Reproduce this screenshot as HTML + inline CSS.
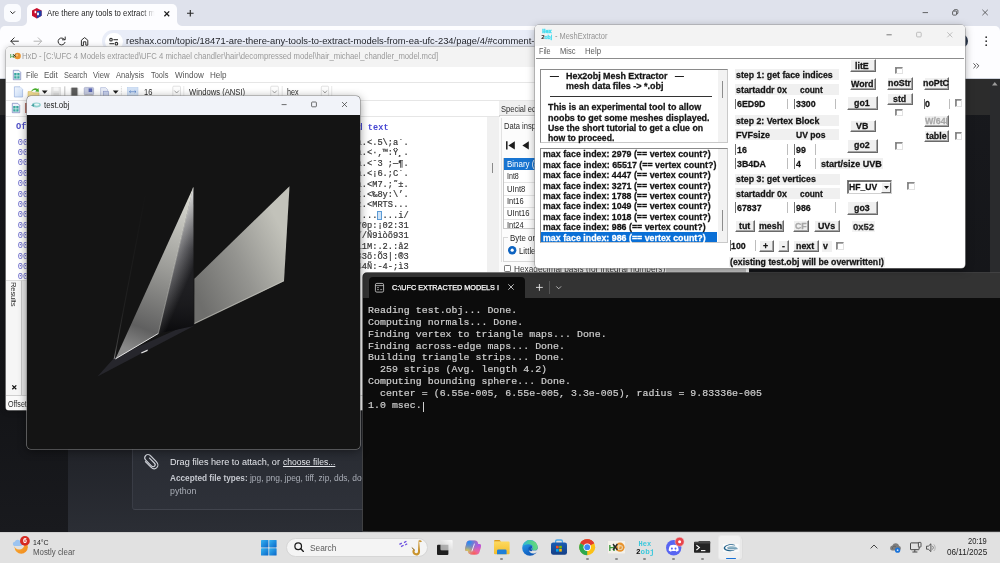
<!DOCTYPE html>
<html>
<head>
<meta charset="utf-8">
<title>desktop</title>
<style>
*{box-sizing:border-box;margin:0;padding:0}
html,body{width:1000px;height:563px;overflow:hidden;background:#1b1c20}
body{font-family:"Liberation Sans",sans-serif;position:relative;color:#222;will-change:transform}
#w{position:absolute;left:0;top:0;width:1000px;height:563px;overflow:hidden;transform:translateZ(0);will-change:transform}
.a{position:absolute}
.t{position:absolute;white-space:pre;}
svg{position:absolute;overflow:visible}
</style>
</head>
<body>
<div id="w">
<!-- sec_chrome -->
<div class="a" style="left:0.00px;top:0.00px;width:1000.00px;height:34.00px;background:#dfe2ec;"></div>
<div class="a" style="left:4.20px;top:4.40px;width:17.20px;height:17.20px;background:#fafbfe;border-radius:5px;"></div>
<svg style="left:10.2px;top:11.4px" width="5.4" height="3.4" viewBox="0 0 5.4 3.4"><path d="M0.4 0.4l2.3 2.3l2.3-2.3" stroke="#222" stroke-width="1" fill="none"/></svg>
<div class="a" style="left:26.60px;top:3.80px;width:150.60px;height:22.40px;background:#fdfdff;border-radius:5px 5px 0 0;"></div>
<svg style="left:21.6px;top:21.2px" width="5" height="5" viewBox="0 0 5 5"><path d="M5 0v5H0A5 5 0 0 0 5 0z" fill="#fdfdff"/></svg>
<svg style="left:177.2px;top:21.2px" width="5" height="5" viewBox="0 0 5 5"><path d="M0 0v5h5A5 5 0 0 1 0 0z" fill="#fdfdff"/></svg>
<svg style="left:31.6px;top:8px" width="9.6" height="10.4" viewBox="0 0 9.6 10.4"><path d="M4.8 0L9.6 2.6V7.8L4.8 10.4L0 7.8V2.6z" fill="#c8102e"/><path d="M4.8 3.2L9.6 2.6V7.8L4.8 10.4z" fill="#1d3fa8"/><rect x="2.6" y="2.8" width="1.6" height="2.4" fill="#fff"/><rect x="5" y="4.6" width="2" height="2.6" fill="#fff" opacity=".9"/></svg>
<div class="t" style="left:46.60px;top:8.14px;font-size:8.4px;line-height:10.08px;color:#1f1f1f;transform-origin:0 50%;transform:scaleX(0.9288);-webkit-mask-image:linear-gradient(90deg,#000 88%,transparent 100%);">Are there any tools to extract m</div>
<svg style="left:164px;top:10.6px" width="5.6" height="5.6" viewBox="0 0 5.6 5.6"><path d="M0.4 0.4l4.8 4.8M5.2 0.4l-4.8 4.8" stroke="#1c1c1c" stroke-width="1.3"/></svg>
<svg style="left:186.6px;top:10.2px" width="6.6" height="6.6" viewBox="0 0 6.6 6.6"><path d="M3.3 0v6.6M0 3.3h6.6" stroke="#2a2a2a" stroke-width="1.15"/></svg>
<svg style="left:918px;top:6px" width="76" height="14" viewBox="0 0 76 14"><g stroke="#3a3a3a" stroke-width="0.75" fill="none"><path d="M4.6 6.6h5.4"/><rect x="34.6" y="5.1" width="4" height="4" rx="0.8"/><path d="M35.8 5.1v-0.5a0.9 0.9 0 0 1 0.9-0.9h2.3a0.9 0.9 0 0 1 0.9 0.9v2.3a0.9 0.9 0 0 1 -0.9 0.9h-0.4"/><path d="M64.4 3.8l5.4 5.4M69.8 3.8l-5.4 5.4"/></g></svg>
<div class="a" style="left:0.00px;top:26.00px;width:1000.00px;height:52.60px;background:#fdfdff;border-radius:5px 5px 0 0;"></div>
<div class="a" style="left:0.00px;top:78.00px;width:1000.00px;height:0.80px;background:#cfd3dc;"></div>
<svg style="left:9px;top:35px" width="84" height="13" viewBox="0 0 84 13"><g fill="none" stroke-width="1" stroke-linecap="round" stroke-linejoin="round"><path d="M9.4 6.2H2M5.2 2.8L1.8 6.2L5.2 9.6" stroke="#303030"/><path d="M25 6.2h7.4M29.2 2.8l3.4 3.4l-3.4 3.4" stroke="#b4b4b4"/><path d="M55.6 4.6A3.5 3.5 0 1 0 56 7.4" stroke="#303030"/><path d="M56.2 2v2.8h-2.8" stroke="#303030"/><path d="M72.4 10.2V5.2L75.6 2.6L78.8 5.2V10.2H76.8V6.8H74.4V10.2z" stroke="#303030"/></g></svg>
<div class="a" style="left:102.20px;top:30.00px;width:470.00px;height:22.40px;background:#e9edf8;border-radius:11.2px;"></div>
<div class="a" style="left:105.40px;top:32.60px;width:17.40px;height:17.40px;background:#ffffff;border-radius:50%;"></div>
<svg style="left:109.2px;top:37.6px" width="9.6" height="7.4" viewBox="0 0 9.6 7.4"><g stroke="#303030" stroke-width="1.1" fill="none"><circle cx="2" cy="1.7" r="1.3"/><path d="M4.4 1.7h4.6"/><circle cx="7.4" cy="5.7" r="1.3"/><path d="M0.4 5.7h4.6"/></g></svg>
<div class="t" style="left:125.60px;top:35.55px;font-size:9.0px;line-height:10.80px;color:#24262b;transform-origin:0 50%;transform:scaleX(1.0428);">reshax.com/topic/18471-are-there-any-tools-to-extract-models-from-ea-ufc-234/page/4/#comment-</div>
<div class="a" style="left:953.80px;top:34.00px;width:14.00px;height:14.00px;background:#28354a;border-radius:50%;"></div>
<svg style="left:984.6px;top:36px" width="2.4" height="10.4" viewBox="0 0 2.4 10.4"><circle cx="1.2" cy="1.2" r="0.9" fill="#333"/><circle cx="1.2" cy="5.2" r="0.9" fill="#333"/><circle cx="1.2" cy="9.2" r="0.9" fill="#333"/></svg>
<svg style="left:973.4px;top:62.6px" width="6.4" height="5.6" viewBox="0 0 6.4 5.6"><path d="M0.5 0.4l2.4 2.4l-2.4 2.4M3.5 0.4l2.4 2.4l-2.4 2.4" stroke="#3a3a3a" stroke-width="0.9" fill="none"/></svg>
<div class="a" style="left:0.00px;top:78.80px;width:1000.00px;height:453.00px;background:linear-gradient(#18191d 0%,#131417 70%,#191a1e 100%);"></div>
<div class="a" style="left:0.00px;top:78.80px;width:1000.00px;height:36.60px;background:#2c2c2c;"></div>
<div class="a" style="left:68.00px;top:410.00px;width:300.00px;height:122.00px;background:linear-gradient(#1d1f24 0%,#22242a 40%,#2b2e35 100%);"></div>
<div class="a" style="left:131.60px;top:440.00px;width:240.00px;height:70.40px;background:linear-gradient(#282b32,#2e3139);border-bottom:1px solid #41444d;border-left:1px solid #393c45;border-radius:0 0 0 3px;"></div>
<div class="a" style="left:990.20px;top:78.80px;width:10.00px;height:452.00px;background:#2a2b2d;"></div>
<svg style="left:991.8px;top:82.4px" width="5.6" height="3.6" viewBox="0 0 5.6 3.6"><path d="M2.8 0L5.6 3.6H0z" fill="#9c9c9c"/></svg>
<svg style="left:143.400px;top:451.600px" width="16" height="18" viewBox="0 0 16 18"><path d="M2.600 3.600c1.300-1.500 3.300-1.500 4.700-0.100l6 6.100c2 2 2 4.600 0.500 6.100c-1.500 1.500-4 1.400-5.900-0.500L2.400 9.700" fill="none" stroke="#cfd2d9" stroke-width="1.150" stroke-linecap="round"/><path d="M2.600 3.600c-1.300 1.500-1.100 3.300 0.200 4.600l5.600 5.700c1 1 2.400 1.100 3.200 0.300c0.800-0.800 0.700-2.200-0.300-3.200L6.500 6.100" fill="none" stroke="#cfd2d9" stroke-width="1.150" stroke-linecap="round"/></svg>
<div class="t" style="left:170.00px;top:455.69px;font-size:9.7px;line-height:11.64px;color:#e3e5ea;transform-origin:0 50%;transform:scaleX(0.9408);">Drag files here to attach, or </div>
<div class="t" style="left:282.60px;top:455.69px;font-size:9.7px;line-height:11.64px;color:#e3e5ea;transform-origin:0 50%;transform:scaleX(0.8836);text-decoration:underline;text-decoration-thickness:0.6px;text-underline-offset:1px;">choose files...</div>
<div class="t" style="left:170.00px;top:472.95px;font-size:9px;line-height:10.80px;color:#c6c9d0;font-weight:bold;transform-origin:0 50%;transform:scaleX(0.9128);">Accepted file types:</div>
<div class="t" style="left:250.40px;top:472.95px;font-size:9px;line-height:10.80px;color:#a9adb6;transform-origin:0 50%;transform:scaleX(0.9346);">jpg, png, jpeg, tiff, zip, dds, do</div>
<div class="t" style="left:170.00px;top:485.55px;font-size:9px;line-height:10.80px;color:#a9adb6;transform-origin:0 50%;transform:scaleX(0.9771);">python</div>
<!-- sec_hxd -->
<div class="a" style="left:6.00px;top:46.70px;width:739.60px;height:363.00px;background:#ffffff;border-radius:4px 4px 3px 3px;box-shadow:0 0 0 0.6px #a8a8a8,0 1px 6px rgba(0,0,0,.3);"></div>
<div class="a" style="left:6.00px;top:46.70px;width:739.60px;height:20.70px;background:#f3f3f3;border-radius:4px 4px 0 0;"></div>
<svg style="left:10.4px;top:52px" width="11" height="8" viewBox="0 0 11 8"><text x="0" y="6" font-size="5.5" font-weight="bold" fill="#3a9a3a" font-family="Liberation Sans">Hx</text><circle cx="7.6" cy="4" r="3.2" fill="#e8932e"/><circle cx="6.8" cy="3.2" r="1.2" fill="#f6c27a"/><path d="M3.4 2.4l2.4 2.4M5.8 2.4l-2.4 2.4" stroke="#222" stroke-width="0.8"/></svg>
<div class="t" style="left:22.20px;top:51.87px;font-size:8.2px;line-height:9.84px;color:#9a9a9a;transform-origin:0 50%;transform:scaleX(0.9410);">HxD - [C:\UFC 4 Models extracted\UFC 4 michael chandler\hair\decompressed model\hair_michael_chandler_model.mcd]</div>
<div class="a" style="left:6.00px;top:82.00px;width:739.60px;height:0.70px;background:#e6e6e6;"></div>
<svg style="left:12.6px;top:70px" width="8" height="10" viewBox="0 0 8 10"><path d="M0.3 0.3h5.4l2 2v7.4H0.3z" fill="#eef3fb" stroke="#5f6fb0" stroke-width="0.6"/><rect x="1.2" y="3" width="5.4" height="5.6" fill="#3aa6a0"/><path d="M1.2 5.8h5.4M3.9 3v5.6" stroke="#fff" stroke-width="0.6"/></svg>
<div class="t" style="left:26.00px;top:70.27px;font-size:8.5px;line-height:10.20px;color:#565656;transform-origin:0 50%;transform:scaleX(0.8908);">File</div>
<div class="t" style="left:44.20px;top:70.27px;font-size:8.5px;line-height:10.20px;color:#565656;transform-origin:0 50%;transform:scaleX(0.9422);">Edit</div>
<div class="t" style="left:63.60px;top:70.27px;font-size:8.5px;line-height:10.20px;color:#565656;transform-origin:0 50%;transform:scaleX(0.8689);">Search</div>
<div class="t" style="left:93.00px;top:70.27px;font-size:8.5px;line-height:10.20px;color:#565656;transform-origin:0 50%;transform:scaleX(0.8977);">View</div>
<div class="t" style="left:116.00px;top:70.27px;font-size:8.5px;line-height:10.20px;color:#565656;transform-origin:0 50%;transform:scaleX(0.8847);">Analysis</div>
<div class="t" style="left:150.60px;top:70.27px;font-size:8.5px;line-height:10.20px;color:#565656;transform-origin:0 50%;transform:scaleX(0.8769);">Tools</div>
<div class="t" style="left:174.60px;top:70.27px;font-size:8.5px;line-height:10.20px;color:#565656;transform-origin:0 50%;transform:scaleX(0.9527);">Window</div>
<div class="t" style="left:210.00px;top:70.27px;font-size:8.5px;line-height:10.20px;color:#565656;transform-origin:0 50%;transform:scaleX(0.9496);">Help</div>
<div class="a" style="left:6.00px;top:100.00px;width:739.60px;height:0.70px;background:#e6e6e6;"></div>
<svg style="left:0;top:0.6px" width="340" height="100" viewBox="0 0 340 100"><defs><linearGradient id="gnew" x1="0" y1="0" x2="1" y2="1"><stop offset="0" stop-color="#f2f7fe"/><stop offset="1" stop-color="#c4d8f4"/></linearGradient></defs><path d="M14.4 85.8h5.6l2.6 2.6v7.6h-8.2z" fill="url(#gnew)" stroke="#9ab2de" stroke-width="0.7"/><path d="M20 85.800v2.600h2.600z" fill="#e6eefb"/><path d="M28 90.600h4l1 1.200h6v5H28z" fill="#f2dd92" stroke="#d2b458" stroke-width="0.500"/><path d="M31.400 89.800c1.600-2.800 4.400-3.200 6.200-1.800l0.800-1l0.600 3.800l-3.800-0.400l1-1c-1.200-0.800-3-0.600-4.200 0.800z" fill="#4ab02e"/><path d="M41.800 89.600h5.800l-2.900 3.200z" fill="#1c1c1c"/><rect x="51.800" y="86.400" width="8.600" height="9.600" fill="#e9e9e9" stroke="#d2d2d2" stroke-width="0.500"/><rect x="53.600" y="86.400" width="5" height="3.400" fill="#f8f8f8"/><rect x="53.400" y="91.800" width="5.600" height="4.200" fill="#dcdcdc"/><path d="M64.800 85.400v11.600" stroke="#b0b0b0" stroke-width="0.800"/><rect x="71.400" y="86.600" width="6" height="9.600" fill="#555"/><path d="M70.400 88h8M70.400 90h8M70.400 92h8M70.400 94h8" stroke="#777" stroke-width="0.500"/><rect x="84.2" y="86.4" width="9.4" height="7.4" rx="1" fill="#c6cbe0" stroke="#8b93b8" stroke-width="0.5"/><rect x="88.6" y="87.4" width="3.6" height="3.6" fill="#5a66b4"/><ellipse cx="89" cy="95" rx="4.6" ry="1.6" fill="#d9d9d9" stroke="#aaa" stroke-width="0.4"/><path d="M100.6 86.6h5l2 2v7.4h-7z" fill="#e9edf8" stroke="#98a4cc" stroke-width="0.5"/><rect x="103.4" y="90.2" width="5.2" height="5.4" fill="#c9d2ee" stroke="#7f8cc0" stroke-width="0.5"/><path d="M112.800 89.600h5.800l-2.900 3.200z" fill="#1c1c1c"/><path d="M121.4 85.4v11.6" stroke="#bdbdbd" stroke-width="0.7" stroke-dasharray="0.8 0.8"/><rect x="127.300" y="86.400" width="10.700" height="8.600" fill="#d3e2f6" stroke="#b3cbec" stroke-width="0.500"/><path d="M129.400 90.700h6.600M129.400 90.700l1.400-1.200M129.400 90.700l1.400 1.200M136 90.700l-1.400-1.200M136 90.700l-1.400 1.200" stroke="#4a78c4" stroke-width="0.600"/><rect x="172.8" y="85.200" width="7.7" height="11" rx="1" fill="#fdfdfd" stroke="#cfcfcf" stroke-width="0.600"/><path d="M174.4 89.6l2.25 2.400l2.25-2.400" stroke="#6a6a6a" stroke-width="0.600" fill="none"/><path d="M183.8 85v11.400" stroke="#dadada" stroke-width="0.600"/><rect x="270.7" y="85.200" width="7.7" height="11" rx="1" fill="#fdfdfd" stroke="#cfcfcf" stroke-width="0.600"/><path d="M272.3 89.6l2.25 2.400l2.25-2.400" stroke="#6a6a6a" stroke-width="0.600" fill="none"/><path d="M282.2 85v11.400" stroke="#dadada" stroke-width="0.600"/><rect x="321.3" y="85.200" width="7.3" height="11" rx="1" fill="#fdfdfd" stroke="#cfcfcf" stroke-width="0.600"/><path d="M322.9 89.6l2.05 2.400l2.05-2.400" stroke="#6a6a6a" stroke-width="0.600" fill="none"/><path d="M331.7 85v11.400" stroke="#dadada" stroke-width="0.600"/></svg>
<div class="t" style="left:143.80px;top:86.74px;font-size:8.4px;line-height:10.08px;color:#2a2a2a;transform-origin:0 50%;transform:scaleX(0.8991);">16</div>
<div class="t" style="left:188.90px;top:86.74px;font-size:8.4px;line-height:10.08px;color:#2a2a2a;transform-origin:0 50%;transform:scaleX(0.9138);">Windows (ANSI)</div>
<div class="t" style="left:287.20px;top:86.74px;font-size:8.4px;line-height:10.08px;color:#2a2a2a;transform-origin:0 50%;transform:scaleX(0.8566);">hex</div>
<div class="a" style="left:6.00px;top:116.40px;width:493.00px;height:0.70px;background:#e6e6e6;"></div>
<svg style="left:12.4px;top:103px" width="8" height="10" viewBox="0 0 8 10"><path d="M0.3 0.3h5.4l2 2v7.4H0.3z" fill="#eef3fb" stroke="#5f6fb0" stroke-width="0.6"/><rect x="1.2" y="3" width="5.4" height="5.6" fill="#3aa6a0"/><path d="M1.2 5.8h5.4M3.9 3v5.6" stroke="#fff" stroke-width="0.6"/></svg>
<div class="a" style="left:25.20px;top:103.40px;width:1.80px;height:9.60px;background:#b8766c;"></div>
<div class="t" style="left:16.00px;top:122.34px;font-size:8.7px;line-height:10.44px;color:#4f4fc8;font-weight:bold;font-family:'Liberation Mono',monospace;">Offset(h)</div>
<div class="t" style="left:17.80px;top:137.84px;font-size:8.7px;line-height:10.44px;color:#6262cc;font-family:'Liberation Mono',monospace;">00000000</div>
<div class="t" style="left:17.80px;top:148.15px;font-size:8.7px;line-height:10.44px;color:#6262cc;font-family:'Liberation Mono',monospace;">00000000</div>
<div class="t" style="left:17.80px;top:158.44px;font-size:8.7px;line-height:10.44px;color:#6262cc;font-family:'Liberation Mono',monospace;">00000000</div>
<div class="t" style="left:17.80px;top:168.84px;font-size:8.7px;line-height:10.44px;color:#6262cc;font-family:'Liberation Mono',monospace;">00000000</div>
<div class="t" style="left:17.80px;top:179.25px;font-size:8.7px;line-height:10.44px;color:#6262cc;font-family:'Liberation Mono',monospace;">00000000</div>
<div class="t" style="left:17.80px;top:189.54px;font-size:8.7px;line-height:10.44px;color:#6262cc;font-family:'Liberation Mono',monospace;">00000000</div>
<div class="t" style="left:17.80px;top:199.84px;font-size:8.7px;line-height:10.44px;color:#6262cc;font-family:'Liberation Mono',monospace;">00000000</div>
<div class="t" style="left:17.80px;top:210.25px;font-size:8.7px;line-height:10.44px;color:#6262cc;font-family:'Liberation Mono',monospace;">00000000</div>
<div class="t" style="left:17.80px;top:220.54px;font-size:8.7px;line-height:10.44px;color:#6262cc;font-family:'Liberation Mono',monospace;">00000000</div>
<div class="t" style="left:17.80px;top:230.84px;font-size:8.7px;line-height:10.44px;color:#6262cc;font-family:'Liberation Mono',monospace;">00000000</div>
<div class="t" style="left:17.80px;top:241.25px;font-size:8.7px;line-height:10.44px;color:#6262cc;font-family:'Liberation Mono',monospace;">00000000</div>
<div class="t" style="left:17.80px;top:251.54px;font-size:8.7px;line-height:10.44px;color:#6262cc;font-family:'Liberation Mono',monospace;">00000000</div>
<div class="t" style="left:17.80px;top:261.85px;font-size:8.7px;line-height:10.44px;color:#6262cc;font-family:'Liberation Mono',monospace;">00000000</div>
<div class="t" style="left:17.80px;top:271.95px;font-size:8.7px;line-height:10.44px;color:#6262cc;font-family:'Liberation Mono',monospace;">00000000</div>
<div class="t" style="left:352.20px;top:123.47px;font-size:8.5px;line-height:10.20px;color:#4848d2;font-weight:bold;font-family:'Liberation Mono',monospace;letter-spacing:0.099px;">ed text</div>
<div class="a" style="left:377.40px;top:211.40px;width:5.00px;height:8.60px;background:#cfe3f7;border:0.7px solid #5b9bd5;"></div>
<div class="t" style="left:356.50px;top:138.15px;font-size:8.7px;line-height:10.44px;color:#363636;font-family:'Liberation Mono',monospace;letter-spacing:0.009px;-webkit-text-stroke:0.2px #363636;">a.&lt;.5\;a´.</div>
<div class="t" style="left:356.50px;top:148.45px;font-size:8.7px;line-height:10.44px;color:#363636;font-family:'Liberation Mono',monospace;letter-spacing:0.009px;-webkit-text-stroke:0.2px #363636;">a.&lt;·,™:Ÿ¸.</div>
<div class="t" style="left:356.50px;top:158.75px;font-size:8.7px;line-height:10.44px;color:#363636;font-family:'Liberation Mono',monospace;letter-spacing:0.009px;-webkit-text-stroke:0.2px #363636;">a.&lt;ˆ3 ;—¶.</div>
<div class="t" style="left:356.50px;top:169.15px;font-size:8.7px;line-height:10.44px;color:#363636;font-family:'Liberation Mono',monospace;letter-spacing:0.009px;-webkit-text-stroke:0.2px #363636;">a.&lt;¡6.;C´.</div>
<div class="t" style="left:356.50px;top:179.55px;font-size:8.7px;line-height:10.44px;color:#363636;font-family:'Liberation Mono',monospace;letter-spacing:0.009px;-webkit-text-stroke:0.2px #363636;">a.&lt;M7.;˜±.</div>
<div class="t" style="left:356.50px;top:189.84px;font-size:8.7px;line-height:10.44px;color:#363636;font-family:'Liberation Mono',monospace;letter-spacing:0.009px;-webkit-text-stroke:0.2px #363636;">I.&lt;‰8y:\’.</div>
<div class="t" style="left:356.50px;top:200.15px;font-size:8.7px;line-height:10.44px;color:#363636;font-family:'Liberation Mono',monospace;letter-spacing:0.009px;-webkit-text-stroke:0.2px #363636;">z.&lt;MRTS...</div>
<div class="t" style="left:356.50px;top:210.55px;font-size:8.7px;line-height:10.44px;color:#363636;font-family:'Liberation Mono',monospace;letter-spacing:0.009px;-webkit-text-stroke:0.2px #363636;">.... ...i/</div>
<div class="t" style="left:356.50px;top:220.84px;font-size:8.7px;line-height:10.44px;color:#363636;font-family:'Liberation Mono',monospace;letter-spacing:0.009px;-webkit-text-stroke:0.2px #363636;">70p:¡02:31</div>
<div class="t" style="left:356.50px;top:231.15px;font-size:8.7px;line-height:10.44px;color:#363636;font-family:'Liberation Mono',monospace;letter-spacing:0.009px;-webkit-text-stroke:0.2px #363636;">//Ñ9ìòõ931</div>
<div class="t" style="left:356.50px;top:241.55px;font-size:8.7px;line-height:10.44px;color:#363636;font-family:'Liberation Mono',monospace;letter-spacing:0.009px;-webkit-text-stroke:0.2px #363636;">11M:.2.:å2</div>
<div class="t" style="left:356.50px;top:251.84px;font-size:8.7px;line-height:10.44px;color:#363636;font-family:'Liberation Mono',monospace;letter-spacing:0.009px;-webkit-text-stroke:0.2px #363636;">33õ:Õ3|:®3</div>
<div class="t" style="left:356.50px;top:262.15px;font-size:8.7px;line-height:10.44px;color:#363636;font-family:'Liberation Mono',monospace;letter-spacing:0.009px;-webkit-text-stroke:0.2px #363636;">44Ñ:-4-;ì3</div>
<div class="a" style="left:487.40px;top:117.00px;width:11.40px;height:155.00px;background:#f0f0f0;"></div>
<div class="a" style="left:491.60px;top:162.50px;width:1.00px;height:10.50px;background:#8a8a8a;"></div>
<div class="a" style="left:498.80px;top:101.00px;width:0.70px;height:171.00px;background:#d9d9d9;"></div>
<div class="a" style="left:499.40px;top:101.20px;width:36.00px;height:14.60px;background:#f0f0f0;border-bottom:0.7px solid #cfcfcf;"></div>
<div class="t" style="left:501.40px;top:104.01px;font-size:8.6px;line-height:10.32px;color:#2c2c2c;transform-origin:0 50%;transform:scaleX(0.8765);">Special ed</div>
<div class="a" style="left:499.40px;top:117.00px;width:250.00px;height:156.00px;background:#fbfbfb;"></div>
<div class="a" style="left:500.60px;top:117.60px;width:40.00px;height:16.00px;background:#fcfcfc;border-left:0.7px solid #e2e2e2;"></div>
<div class="t" style="left:504.40px;top:121.21px;font-size:8.6px;line-height:10.32px;color:#2c2c2c;transform-origin:0 50%;transform:scaleX(0.8808);">Data insp</div>
<div class="a" style="left:500.60px;top:133.60px;width:245.00px;height:128.60px;background:#fcfcfc;border-left:0.7px solid #e2e2e2;"></div>
<svg style="left:506px;top:140.800px" width="24" height="9" viewBox="0 0 24 9"><path d="M0.800 0.300v8.200" stroke="#1c1c1c" stroke-width="1.500"/><path d="M8.800 0.300v8.200L2.400 4.400z" fill="#1c1c1c"/><path d="M22.800 0.300v8.200L16.400 4.400z" fill="#1c1c1c"/></svg>
<div class="a" style="left:503.40px;top:157.60px;width:42.00px;height:71.00px;background:#fff;border:0.700px solid #c8c8c8;"></div>
<div class="a" style="left:504.20px;top:158.40px;width:42.00px;height:11.40px;background:#1774d1;"></div>
<div class="t" style="left:507.30px;top:159.21px;font-size:8.6px;line-height:10.32px;color:#fff;transform-origin:0 50%;transform:scaleX(0.9232);">Binary (8 bit)</div>
<div class="t" style="left:507.30px;top:171.21px;font-size:8.6px;line-height:10.32px;color:#1f1f1f;transform-origin:0 50%;transform:scaleX(0.8227);">Int8</div>
<div class="a" style="left:504.20px;top:182.30px;width:42.00px;height:0.60px;background:#e6e6e6;"></div>
<div class="t" style="left:507.30px;top:183.51px;font-size:8.6px;line-height:10.32px;color:#1f1f1f;transform-origin:0 50%;transform:scaleX(0.8903);">UInt8</div>
<div class="a" style="left:504.20px;top:194.60px;width:42.00px;height:0.60px;background:#e6e6e6;"></div>
<div class="t" style="left:507.30px;top:195.71px;font-size:8.6px;line-height:10.32px;color:#1f1f1f;transform-origin:0 50%;transform:scaleX(0.8679);">Int16</div>
<div class="a" style="left:504.20px;top:206.80px;width:42.00px;height:0.60px;background:#e6e6e6;"></div>
<div class="t" style="left:507.30px;top:208.01px;font-size:8.6px;line-height:10.32px;color:#1f1f1f;transform-origin:0 50%;transform:scaleX(0.8881);">UInt16</div>
<div class="a" style="left:504.20px;top:219.10px;width:42.00px;height:0.60px;background:#e6e6e6;"></div>
<div class="t" style="left:507.30px;top:220.21px;font-size:8.6px;line-height:10.32px;color:#1f1f1f;transform-origin:0 50%;transform:scaleX(0.8679);">Int24</div>
<div class="a" style="left:504.20px;top:231.30px;width:42.00px;height:0.60px;background:#e6e6e6;"></div>
<div class="a" style="left:501.60px;top:228.40px;width:44.00px;height:33.80px;background:#fcfcfc;"></div>
<div class="a" style="left:503.40px;top:228.00px;width:42.00px;height:0.70px;background:#c8c8c8;"></div>
<div class="a" style="left:503.40px;top:237.40px;width:45.00px;height:24.80px;border:0.700px solid #d8d8d8;"></div>
<div class="a" style="left:508.00px;top:233.40px;width:30.00px;height:8.00px;background:#fcfcfc;"></div>
<div class="t" style="left:509.60px;top:232.51px;font-size:8.6px;line-height:10.32px;color:#1f1f1f;transform-origin:0 50%;transform:scaleX(0.9201);">Byte order</div>
<svg style="left:508.400px;top:245.900px" width="8.400" height="8.400" viewBox="0 0 8.400 8.400"><circle cx="4.200" cy="4.200" r="4.200" fill="#0c62c0"/><circle cx="4.200" cy="4.200" r="1.600" fill="#fff"/></svg>
<div class="t" style="left:519.10px;top:245.51px;font-size:8.6px;line-height:10.32px;color:#1f1f1f;transform-origin:0 50%;transform:scaleX(0.9056);">Little endian</div>
<div class="a" style="left:503.80px;top:265.10px;width:7.40px;height:7.40px;background:#fff;border:0.800px solid #7a7a7a;border-radius:1.200px;"></div>
<div class="t" style="left:514.20px;top:263.88px;font-size:8.8px;line-height:10.56px;color:#333;transform-origin:0 50%;transform:scaleX(0.9426);">Hexadecimal basis (for integral numbers)</div>
<div class="a" style="left:666.00px;top:268.00px;width:79.60px;height:5.00px;background:#c4c4c4;"></div>
<div class="a" style="left:6.00px;top:280.00px;width:16.00px;height:114.60px;background:#f6f6f6;border-right:0.7px solid #c9c9c9;border-top:0.7px solid #dcdcdc;"></div>
<div class="a" style="left:22.00px;top:280.00px;width:6.00px;height:114.60px;background:#e9e9e9;border-top:0.7px solid #dcdcdc;"></div>
<div class="t" style="left:13.40px;top:282.00px;font-size:7.7px;line-height:9.24px;color:#2c2c2c;letter-spacing:-0.182px;transform-origin:0 0;transform:rotate(90deg) translate(0,-4.6px);">Results</div>
<svg style="left:11.6px;top:384.6px" width="4.6" height="4.6" viewBox="0 0 4.6 4.6"><path d="M0.3 0.3l4 4M4.3 0.3l-4 4" stroke="#111" stroke-width="1.2"/></svg>
<div class="a" style="left:6.00px;top:394.60px;width:739.60px;height:15.10px;background:#fafafa;border-top:0.7px solid #d0d0d0;border-radius:0 0 3px 3px;"></div>
<div class="t" style="left:7.80px;top:398.74px;font-size:8.4px;line-height:10.08px;color:#2c2c2c;transform-origin:0 50%;transform:scaleX(0.8487);">Offset(h)</div>
<!-- sec_term -->
<div class="a" style="left:363.00px;top:273.00px;width:640.00px;height:258.00px;background:#0c0c0c;border-radius:4px 0 0 0;box-shadow:0 0 0 0.7px #4a4a4a;"></div>
<div class="a" style="left:363.00px;top:273.00px;width:640.00px;height:25.00px;background:#333333;border-radius:4px 0 0 0;"></div>
<div class="a" style="left:368.60px;top:276.80px;width:156.60px;height:21.20px;background:#0c0c0c;border-radius:4px 4px 0 0;"></div>
<svg style="left:375.2px;top:282.6px" width="9" height="9.5" viewBox="0 0 9 9.5"><rect x="0.4" y="0.4" width="8.2" height="8.7" rx="1.4" fill="none" stroke="#d8d8d8" stroke-width="0.8"/><path d="M0.4 2.6h8.2" stroke="#d8d8d8" stroke-width="0.7"/><path d="M2 4.6h2M2 6.6h2M5.2 6.6h2" stroke="#bdbdbd" stroke-width="0.7"/></svg>
<div class="t" style="left:391.50px;top:283.40px;font-size:8.0px;line-height:9.60px;color:#ffffff;transform-origin:0 50%;transform:scaleX(0.9084);-webkit-text-stroke:0.25px #fff;">C:\UFC EXTRACTED MODELS I</div>
<svg style="left:508px;top:284.4px" width="6" height="6" viewBox="0 0 6 6"><path d="M0.3 0.3l5.4 5.4M5.7 0.3l-5.4 5.4" stroke="#e4e4e4" stroke-width="0.8"/></svg>
<svg style="left:535.600px;top:284.200px" width="6.800" height="6.800" viewBox="0 0 6.800 6.800"><path d="M3.400 0v6.800M0 3.400h6.800" stroke="#e6e6e6" stroke-width="0.900"/></svg>
<div class="a" style="left:549.40px;top:281.00px;width:0.70px;height:13.00px;background:#555;"></div>
<svg style="left:556.2px;top:286px" width="5.4" height="3.4" viewBox="0 0 5.4 3.4"><path d="M0.3 0.4l2.4 2.4l2.4-2.4" stroke="#d6d6d6" stroke-width="0.8" fill="none"/></svg>
<div class="t" style="left:368.00px;top:304.76px;font-size:9.9px;line-height:11.88px;color:#cfcfcf;font-family:'Liberation Mono',monospace;letter-spacing:0.043px;-webkit-text-stroke:0.2px #cfcfcf;">Reading test.obj... Done.</div>
<div class="t" style="left:368.00px;top:316.69px;font-size:9.9px;line-height:11.88px;color:#cfcfcf;font-family:'Liberation Mono',monospace;letter-spacing:0.043px;-webkit-text-stroke:0.2px #cfcfcf;">Computing normals... Done.</div>
<div class="t" style="left:368.00px;top:328.62px;font-size:9.9px;line-height:11.88px;color:#cfcfcf;font-family:'Liberation Mono',monospace;letter-spacing:0.043px;-webkit-text-stroke:0.2px #cfcfcf;">Finding vertex to triangle maps... Done.</div>
<div class="t" style="left:368.00px;top:340.56px;font-size:9.9px;line-height:11.88px;color:#cfcfcf;font-family:'Liberation Mono',monospace;letter-spacing:0.043px;-webkit-text-stroke:0.2px #cfcfcf;">Finding across-edge maps... Done.</div>
<div class="t" style="left:368.00px;top:352.48px;font-size:9.9px;line-height:11.88px;color:#cfcfcf;font-family:'Liberation Mono',monospace;letter-spacing:0.043px;-webkit-text-stroke:0.2px #cfcfcf;">Building triangle strips... Done.</div>
<div class="t" style="left:368.00px;top:364.41px;font-size:9.9px;line-height:11.88px;color:#cfcfcf;font-family:'Liberation Mono',monospace;letter-spacing:0.043px;-webkit-text-stroke:0.2px #cfcfcf;">  259 strips (Avg. length 4.2)</div>
<div class="t" style="left:368.00px;top:376.34px;font-size:9.9px;line-height:11.88px;color:#cfcfcf;font-family:'Liberation Mono',monospace;letter-spacing:0.043px;-webkit-text-stroke:0.2px #cfcfcf;">Computing bounding sphere... Done.</div>
<div class="t" style="left:368.00px;top:388.27px;font-size:9.9px;line-height:11.88px;color:#cfcfcf;font-family:'Liberation Mono',monospace;letter-spacing:0.043px;-webkit-text-stroke:0.2px #cfcfcf;">  center = (6.55e-005, 6.55e-005, 3.3e-005), radius = 9.83336e-005</div>
<div class="t" style="left:368.00px;top:400.20px;font-size:9.9px;line-height:11.88px;color:#cfcfcf;font-family:'Liberation Mono',monospace;letter-spacing:0.043px;-webkit-text-stroke:0.2px #cfcfcf;">1.0 msec.</div>
<div class="a" style="left:422.50px;top:401.64px;width:0.80px;height:10.00px;background:#cfcfcf;"></div>
<!-- sec_mx -->
<div class="a" style="left:535.00px;top:25.00px;width:429.60px;height:243.00px;background:#ffffff;border-radius:4px;box-shadow:0 0 0 0.6px #9a9a9a, 0 2px 8px rgba(0,0,0,.35);"></div>
<div class="a" style="left:535.00px;top:25.00px;width:429.60px;height:21.00px;background:#f3f3f3;border-radius:4px 4px 0 0;"></div>
<svg style="left:541px;top:29.400px" width="12" height="11" viewBox="0 0 12 11"><text x="1.200" y="3.800" font-size="4.600" font-weight="bold" fill="#3fdcf0" stroke="#3fdcf0" stroke-width="0.35" font-family="Liberation Mono" textLength="9.600" lengthAdjust="spacingAndGlyphs">Hex</text><text x="0.200" y="9.600" font-size="6.200" font-weight="bold" fill="#222" font-family="Liberation Sans">2</text><text x="3.400" y="9.600" font-size="6.200" font-weight="bold" fill="#3fdcf0" stroke="#3fdcf0" stroke-width="0.3" font-family="Liberation Sans" textLength="7.800" lengthAdjust="spacingAndGlyphs">obj</text></svg>
<div class="t" style="left:554.50px;top:30.61px;font-size:8.6px;line-height:10.32px;color:#949494;transform-origin:0 50%;transform:scaleX(0.8651);">- MeshExtractor</div>
<svg class="a" style="left:880px;top:28px" width="80" height="14" viewBox="0 0 80 14"><g stroke="#a9a9a9" stroke-width="0.7" fill="none"><path d="M6.500 6.800h5.200" stroke="#5a5a5a" stroke-width="0.800"/><rect x="36.6" y="4.3" width="4.6" height="4.6" rx="0.8"/><path d="M67.3 4.3l5 5M72.3 4.3l-5 5"/></g></svg>
<div class="t" style="left:538.60px;top:45.78px;font-size:8.8px;line-height:10.56px;color:#5c5c5c;transform-origin:0 50%;transform:scaleX(0.8181);">File</div>
<div class="t" style="left:559.50px;top:45.78px;font-size:8.8px;line-height:10.56px;color:#5c5c5c;transform-origin:0 50%;transform:scaleX(0.8570);">Misc</div>
<div class="t" style="left:585.00px;top:45.78px;font-size:8.8px;line-height:10.56px;color:#5c5c5c;transform-origin:0 50%;transform:scaleX(0.8841);">Help</div>
<div class="a" style="left:535.50px;top:57.60px;width:428.60px;height:1.00px;background:#8c8c8c;"></div>
<div class="a" style="left:540.30px;top:69.20px;width:188.00px;height:73.80px;background:#fff;border:1px solid #8a8a8a;border-right-color:#c9c9c9;border-bottom-color:#c9c9c9;"></div>
<div class="t" style="left:550.40px;top:70.19px;font-size:9.4px;line-height:11.28px;color:#141414;font-weight:bold;-webkit-text-stroke:0.28px #141414;transform-origin:0 50%;transform:scaleX(0.9415);">—</div>
<div class="t" style="left:674.50px;top:70.19px;font-size:9.4px;line-height:11.28px;color:#141414;font-weight:bold;-webkit-text-stroke:0.28px #141414;transform-origin:0 50%;transform:scaleX(0.9415);">—</div>
<div class="t" style="left:565.80px;top:70.19px;font-size:9.4px;line-height:11.28px;color:#141414;font-weight:bold;transform-origin:0 50%;transform:scaleX(0.9497);-webkit-text-stroke:0.28px #141414;">Hex2obj Mesh Extractor</div>
<div class="t" style="left:565.80px;top:80.09px;font-size:9.4px;line-height:11.28px;color:#141414;font-weight:bold;transform-origin:0 50%;transform:scaleX(0.9567);-webkit-text-stroke:0.28px #141414;">mesh data files -&gt; *.obj</div>
<div class="a" style="left:550.40px;top:96.00px;width:161.50px;height:0.90px;background:#333;"></div>
<div class="t" style="left:547.50px;top:100.89px;font-size:9.4px;line-height:11.28px;color:#141414;font-weight:bold;transform-origin:0 50%;transform:scaleX(0.9511);-webkit-text-stroke:0.28px #141414;">This is an experimental tool to allow</div>
<div class="t" style="left:547.50px;top:111.59px;font-size:9.4px;line-height:11.28px;color:#141414;font-weight:bold;transform-origin:0 50%;transform:scaleX(0.9543);-webkit-text-stroke:0.28px #141414;">noobs to get some meshes displayed.</div>
<div class="t" style="left:547.50px;top:122.09px;font-size:9.4px;line-height:11.28px;color:#141414;font-weight:bold;transform-origin:0 50%;transform:scaleX(0.9364);-webkit-text-stroke:0.28px #141414;">Use the short tutorial to get a clue on</div>
<div class="t" style="left:547.50px;top:132.49px;font-size:9.4px;line-height:11.28px;color:#141414;font-weight:bold;transform-origin:0 50%;transform:scaleX(0.9228);-webkit-text-stroke:0.28px #141414;">how to proceed.</div>
<div class="a" style="left:717.60px;top:70.20px;width:9.70px;height:71.80px;background:#f2f2f2;"></div>
<div class="a" style="left:722.20px;top:81.00px;width:1.00px;height:16.50px;background:#8d8d8d;"></div>
<div class="a" style="left:540.30px;top:148.00px;width:188.00px;height:94.50px;background:#fff;border:1px solid #8a8a8a;border-right-color:#c9c9c9;border-bottom-color:#c9c9c9;"></div>
<div class="a" style="left:541.30px;top:231.80px;width:175.50px;height:10.40px;background:#0a6fd6;"></div>
<div class="t" style="left:542.50px;top:148.39px;font-size:9.4px;line-height:11.28px;color:#141414;font-weight:bold;transform-origin:0 50%;transform:scaleX(0.9431);-webkit-text-stroke:0.28px #141414;">max face index: 2979 (== vertex count?)</div>
<div class="t" style="left:542.50px;top:158.79px;font-size:9.4px;line-height:11.28px;color:#141414;font-weight:bold;transform-origin:0 50%;transform:scaleX(0.9478);-webkit-text-stroke:0.28px #141414;">max face index: 65517 (== vertex count?)</div>
<div class="t" style="left:542.50px;top:169.19px;font-size:9.4px;line-height:11.28px;color:#141414;font-weight:bold;transform-origin:0 50%;transform:scaleX(0.9431);-webkit-text-stroke:0.28px #141414;">max face index: 4447 (== vertex count?)</div>
<div class="t" style="left:542.50px;top:179.59px;font-size:9.4px;line-height:11.28px;color:#141414;font-weight:bold;transform-origin:0 50%;transform:scaleX(0.9431);-webkit-text-stroke:0.28px #141414;">max face index: 3271 (== vertex count?)</div>
<div class="t" style="left:542.50px;top:189.99px;font-size:9.4px;line-height:11.28px;color:#141414;font-weight:bold;transform-origin:0 50%;transform:scaleX(0.9431);-webkit-text-stroke:0.28px #141414;">max face index: 1788 (== vertex count?)</div>
<div class="t" style="left:542.50px;top:200.39px;font-size:9.4px;line-height:11.28px;color:#141414;font-weight:bold;transform-origin:0 50%;transform:scaleX(0.9431);-webkit-text-stroke:0.28px #141414;">max face index: 1049 (== vertex count?)</div>
<div class="t" style="left:542.50px;top:210.79px;font-size:9.4px;line-height:11.28px;color:#141414;font-weight:bold;transform-origin:0 50%;transform:scaleX(0.9431);-webkit-text-stroke:0.28px #141414;">max face index: 1018 (== vertex count?)</div>
<div class="t" style="left:542.50px;top:221.19px;font-size:9.4px;line-height:11.28px;color:#141414;font-weight:bold;transform-origin:0 50%;transform:scaleX(0.9427);-webkit-text-stroke:0.28px #141414;">max face index: 986 (== vertex count?)</div>
<div class="t" style="left:542.50px;top:231.59px;font-size:9.4px;line-height:11.28px;color:#ffffff;font-weight:bold;transform-origin:0 50%;transform:scaleX(0.9427);-webkit-text-stroke:0.28px #ffffff;">max face index: 986 (== vertex count?)</div>
<div class="a" style="left:717.60px;top:149.00px;width:9.70px;height:92.50px;background:#f2f2f2;"></div>
<div class="a" style="left:722.40px;top:210.30px;width:1.00px;height:20.50px;background:#8d8d8d;"></div>
<!-- sec_mx2 -->
<div class="a" style="left:735.40px;top:69.40px;width:104.00px;height:10.80px;background:#f0f0f0;"></div><div class="t" style="left:736.00px;top:69.29px;font-size:9.4px;line-height:11.28px;color:#141414;font-weight:bold;transform-origin:0 50%;transform:scaleX(0.9379);-webkit-text-stroke:0.28px #141414;">step 1: get face indices</div>
<div class="a" style="left:735.40px;top:83.70px;width:104.00px;height:11.00px;background:#f0f0f0;"></div><div class="t" style="left:736.00px;top:83.89px;font-size:9.4px;line-height:11.28px;color:#141414;font-weight:bold;transform-origin:0 50%;transform:scaleX(0.9478);-webkit-text-stroke:0.28px #141414;">startaddr 0x</div>
<div class="t" style="left:799.70px;top:83.89px;font-size:9.4px;line-height:11.28px;color:#141414;font-weight:bold;transform-origin:0 50%;transform:scaleX(0.8913);-webkit-text-stroke:0.28px #141414;">count</div>
<div class="a" style="left:735.40px;top:98.75px;width:0.90px;height:10.50px;background:#6e6e6e;"></div><div class="a" style="left:787.10px;top:98.75px;width:0.90px;height:10.50px;background:#bdbdbd;"></div><div class="t" style="left:737.00px;top:98.49px;font-size:9.4px;line-height:11.28px;color:#141414;font-weight:bold;transform-origin:0 50%;transform:scaleX(0.9415);-webkit-text-stroke:0.28px #141414;">6ED9D</div>
<div class="a" style="left:794.30px;top:98.75px;width:0.90px;height:10.50px;background:#6e6e6e;"></div><div class="a" style="left:835.10px;top:98.75px;width:0.90px;height:10.50px;background:#bdbdbd;"></div><div class="t" style="left:795.90px;top:98.49px;font-size:9.4px;line-height:11.28px;color:#141414;font-weight:bold;transform-origin:0 50%;transform:scaleX(0.9415);-webkit-text-stroke:0.28px #141414;">3300</div>
<div class="a" style="left:735.40px;top:115.30px;width:104.00px;height:11.00px;background:#f0f0f0;"></div><div class="t" style="left:736.00px;top:115.19px;font-size:9.4px;line-height:11.28px;color:#141414;font-weight:bold;transform-origin:0 50%;transform:scaleX(0.9347);-webkit-text-stroke:0.28px #141414;">step 2: Vertex Block</div>
<div class="a" style="left:735.40px;top:129.30px;width:104.00px;height:11.00px;background:#f0f0f0;"></div><div class="t" style="left:736.00px;top:129.49px;font-size:9.4px;line-height:11.28px;color:#141414;font-weight:bold;transform-origin:0 50%;transform:scaleX(0.9572);-webkit-text-stroke:0.28px #141414;">FVFsize</div>
<div class="t" style="left:795.50px;top:129.49px;font-size:9.4px;line-height:11.28px;color:#141414;font-weight:bold;transform-origin:0 50%;transform:scaleX(0.9111);-webkit-text-stroke:0.28px #141414;">UV pos</div>
<div class="a" style="left:735.40px;top:144.15px;width:0.90px;height:10.50px;background:#6e6e6e;"></div><div class="a" style="left:787.10px;top:144.15px;width:0.90px;height:10.50px;background:#bdbdbd;"></div><div class="t" style="left:737.00px;top:143.89px;font-size:9.4px;line-height:11.28px;color:#141414;font-weight:bold;transform-origin:0 50%;transform:scaleX(0.9415);-webkit-text-stroke:0.28px #141414;">16</div>
<div class="a" style="left:794.30px;top:144.15px;width:0.90px;height:10.50px;background:#6e6e6e;"></div><div class="a" style="left:814.60px;top:144.15px;width:0.90px;height:10.50px;background:#bdbdbd;"></div><div class="t" style="left:795.90px;top:143.89px;font-size:9.4px;line-height:11.28px;color:#141414;font-weight:bold;transform-origin:0 50%;transform:scaleX(0.9415);-webkit-text-stroke:0.28px #141414;">99</div>
<div class="a" style="left:735.40px;top:158.15px;width:0.90px;height:10.50px;background:#6e6e6e;"></div><div class="a" style="left:787.10px;top:158.15px;width:0.90px;height:10.50px;background:#bdbdbd;"></div><div class="t" style="left:737.00px;top:157.89px;font-size:9.4px;line-height:11.28px;color:#141414;font-weight:bold;transform-origin:0 50%;transform:scaleX(0.9415);-webkit-text-stroke:0.28px #141414;">3B4DA</div>
<div class="a" style="left:794.30px;top:158.15px;width:0.90px;height:10.50px;background:#6e6e6e;"></div><div class="a" style="left:814.60px;top:158.15px;width:0.90px;height:10.50px;background:#bdbdbd;"></div><div class="t" style="left:795.90px;top:157.89px;font-size:9.4px;line-height:11.28px;color:#141414;font-weight:bold;-webkit-text-stroke:0.28px #141414;transform-origin:0 50%;transform:scaleX(0.9415);">4</div>
<div class="a" style="left:819.80px;top:157.80px;width:63.00px;height:11.00px;background:#f0f0f0;"></div><div class="t" style="left:820.60px;top:157.89px;font-size:9.4px;line-height:11.28px;color:#141414;font-weight:bold;transform-origin:0 50%;transform:scaleX(0.9635);-webkit-text-stroke:0.28px #141414;">start/size UVB</div>
<div class="a" style="left:735.40px;top:173.50px;width:104.60px;height:11.20px;background:#f0f0f0;"></div><div class="t" style="left:736.00px;top:173.49px;font-size:9.4px;line-height:11.28px;color:#141414;font-weight:bold;transform-origin:0 50%;transform:scaleX(0.9395);-webkit-text-stroke:0.28px #141414;">step 3: get vertices</div>
<div class="a" style="left:735.40px;top:188.00px;width:104.60px;height:11.30px;background:#f0f0f0;"></div><div class="t" style="left:736.00px;top:188.09px;font-size:9.4px;line-height:11.28px;color:#141414;font-weight:bold;transform-origin:0 50%;transform:scaleX(0.9478);-webkit-text-stroke:0.28px #141414;">startaddr 0x</div>
<div class="t" style="left:799.70px;top:188.09px;font-size:9.4px;line-height:11.28px;color:#141414;font-weight:bold;transform-origin:0 50%;transform:scaleX(0.8913);-webkit-text-stroke:0.28px #141414;">count</div>
<div class="a" style="left:735.40px;top:202.45px;width:0.90px;height:10.50px;background:#6e6e6e;"></div><div class="a" style="left:787.10px;top:202.45px;width:0.90px;height:10.50px;background:#bdbdbd;"></div><div class="t" style="left:737.00px;top:202.19px;font-size:9.4px;line-height:11.28px;color:#141414;font-weight:bold;transform-origin:0 50%;transform:scaleX(0.9415);-webkit-text-stroke:0.28px #141414;">67837</div>
<div class="a" style="left:794.30px;top:202.45px;width:0.90px;height:10.50px;background:#6e6e6e;"></div><div class="a" style="left:835.10px;top:202.45px;width:0.90px;height:10.50px;background:#bdbdbd;"></div><div class="t" style="left:795.90px;top:202.19px;font-size:9.4px;line-height:11.28px;color:#141414;font-weight:bold;transform-origin:0 50%;transform:scaleX(0.9415);-webkit-text-stroke:0.28px #141414;">986</div>
<div class="a" style="left:849.60px;top:59.40px;width:26.20px;height:12.70px;background:#f0f0f0;border:1px solid #fff;border-right-color:#6a6a6a;border-bottom-color:#6a6a6a;box-shadow:inset -1px -1px 0 #a6a6a6;"></div><div class="t" style="left:855.42px;top:59.64px;font-size:9.4px;line-height:11.28px;color:#141414;font-weight:bold;transform-origin:0 50%;transform:scaleX(0.9415);-webkit-text-stroke:0.28px #141414;">litE</div>
<div class="a" style="left:849.60px;top:77.80px;width:26.20px;height:12.70px;background:#f0f0f0;border:1px solid #fff;border-right-color:#6a6a6a;border-bottom-color:#6a6a6a;box-shadow:inset -1px -1px 0 #a6a6a6;"></div><div class="t" style="left:851.08px;top:78.04px;font-size:9.4px;line-height:11.28px;color:#141414;font-weight:bold;transform-origin:0 50%;transform:scaleX(0.9415);-webkit-text-stroke:0.28px #141414;">Word</div>
<div class="a" style="left:846.60px;top:96.40px;width:31.10px;height:13.60px;background:#f0f0f0;border:1px solid #fff;border-right-color:#6a6a6a;border-bottom-color:#6a6a6a;box-shadow:inset -1px -1px 0 #a6a6a6;"></div><div class="t" style="left:853.88px;top:97.09px;font-size:9.4px;line-height:11.28px;color:#141414;font-weight:bold;transform-origin:0 50%;transform:scaleX(0.9415);-webkit-text-stroke:0.28px #141414;">go1</div>
<div class="a" style="left:849.60px;top:120.20px;width:26.20px;height:12.10px;background:#f0f0f0;border:1px solid #fff;border-right-color:#6a6a6a;border-bottom-color:#6a6a6a;box-shadow:inset -1px -1px 0 #a6a6a6;"></div><div class="t" style="left:856.15px;top:120.14px;font-size:9.4px;line-height:11.28px;color:#141414;font-weight:bold;transform-origin:0 50%;transform:scaleX(0.9415);-webkit-text-stroke:0.28px #141414;">VB</div>
<div class="a" style="left:846.60px;top:138.60px;width:31.10px;height:14.00px;background:#f0f0f0;border:1px solid #fff;border-right-color:#6a6a6a;border-bottom-color:#6a6a6a;box-shadow:inset -1px -1px 0 #a6a6a6;"></div><div class="t" style="left:853.88px;top:139.49px;font-size:9.4px;line-height:11.28px;color:#141414;font-weight:bold;transform-origin:0 50%;transform:scaleX(0.9415);-webkit-text-stroke:0.28px #141414;">go2</div>
<div class="a" style="left:846.80px;top:200.70px;width:30.90px;height:14.00px;background:#f0f0f0;border:1px solid #fff;border-right-color:#6a6a6a;border-bottom-color:#6a6a6a;box-shadow:inset -1px -1px 0 #a6a6a6;"></div><div class="t" style="left:853.98px;top:201.59px;font-size:9.4px;line-height:11.28px;color:#141414;font-weight:bold;transform-origin:0 50%;transform:scaleX(0.9415);-webkit-text-stroke:0.28px #141414;">go3</div>
<div class="a" style="left:895.20px;top:66.70px;width:7.70px;height:7.70px;background:#fff;border:1px solid #8a8a8a;border-right-color:#e2e2e2;border-bottom-color:#e2e2e2;box-shadow:inset 0.6px 0.6px 0 #5c5c5c;"></div>
<div class="a" style="left:887.00px;top:77.00px;width:26.00px;height:13.00px;background:#f0f0f0;border:1px solid #fff;border-right-color:#6a6a6a;border-bottom-color:#6a6a6a;box-shadow:inset -1px -1px 0 #a6a6a6;"></div><div class="t" style="left:888.05px;top:77.39px;font-size:9.4px;line-height:11.28px;color:#141414;font-weight:bold;transform-origin:0 50%;transform:scaleX(0.9415);-webkit-text-stroke:0.28px #141414;">noStr</div>
<div class="a" style="left:887.00px;top:92.70px;width:26.00px;height:12.10px;background:#f0f0f0;border:1px solid #fff;border-right-color:#6a6a6a;border-bottom-color:#6a6a6a;box-shadow:inset -1px -1px 0 #a6a6a6;"></div><div class="t" style="left:892.96px;top:92.64px;font-size:9.4px;line-height:11.28px;color:#141414;font-weight:bold;transform-origin:0 50%;transform:scaleX(0.9415);-webkit-text-stroke:0.28px #141414;">std</div>
<div class="a" style="left:895.20px;top:108.60px;width:7.70px;height:7.70px;background:#fff;border:1px solid #8a8a8a;border-right-color:#e2e2e2;border-bottom-color:#e2e2e2;box-shadow:inset 0.6px 0.6px 0 #5c5c5c;"></div>
<div class="a" style="left:895.20px;top:141.80px;width:7.70px;height:8.00px;background:#fff;border:1px solid #8a8a8a;border-right-color:#e2e2e2;border-bottom-color:#e2e2e2;box-shadow:inset 0.6px 0.6px 0 #5c5c5c;"></div>
<div class="a" style="left:923.80px;top:77.00px;width:25.60px;height:13.00px;background:#f0f0f0;border:1px solid #fff;border-right-color:#6a6a6a;border-bottom-color:#6a6a6a;box-shadow:inset -1px -1px 0 #a6a6a6;"></div><div class="t" style="left:923.17px;top:77.39px;font-size:9.4px;line-height:11.28px;color:#141414;font-weight:bold;transform-origin:0 50%;transform:scaleX(0.9415);-webkit-text-stroke:0.28px #141414;">noPtC</div>
<div class="a" style="left:923.80px;top:98.75px;width:0.90px;height:10.50px;background:#6e6e6e;"></div><div class="a" style="left:949.10px;top:98.75px;width:0.90px;height:10.50px;background:#bdbdbd;"></div><div class="t" style="left:925.40px;top:98.49px;font-size:9.4px;line-height:11.28px;color:#141414;font-weight:bold;-webkit-text-stroke:0.28px #141414;transform-origin:0 50%;transform:scaleX(0.9415);">0</div>
<div class="a" style="left:954.90px;top:98.60px;width:7.50px;height:8.00px;background:#fff;border:1px solid #8a8a8a;border-right-color:#e2e2e2;border-bottom-color:#e2e2e2;box-shadow:inset 0.6px 0.6px 0 #5c5c5c;"></div>
<div class="a" style="left:923.80px;top:114.80px;width:25.60px;height:12.20px;background:#f0f0f0;border:1px solid #fff;border-right-color:#6a6a6a;border-bottom-color:#6a6a6a;box-shadow:inset -1px -1px 0 #a6a6a6;"></div><div class="t" style="left:924.64px;top:114.79px;font-size:9.4px;line-height:11.28px;color:#a8a8a8;font-weight:bold;transform-origin:0 50%;transform:scaleX(0.9415);-webkit-text-stroke:0.28px #a8a8a8;">W/64I</div>
<div class="a" style="left:923.80px;top:129.60px;width:25.60px;height:12.20px;background:#f0f0f0;border:1px solid #fff;border-right-color:#6a6a6a;border-bottom-color:#6a6a6a;box-shadow:inset -1px -1px 0 #a6a6a6;"></div><div class="t" style="left:925.87px;top:129.59px;font-size:9.4px;line-height:11.28px;color:#141414;font-weight:bold;transform-origin:0 50%;transform:scaleX(0.9415);-webkit-text-stroke:0.28px #141414;">table</div>
<div class="a" style="left:954.90px;top:131.80px;width:7.50px;height:8.00px;background:#fff;border:1px solid #8a8a8a;border-right-color:#e2e2e2;border-bottom-color:#e2e2e2;box-shadow:inset 0.6px 0.6px 0 #5c5c5c;"></div>
<div class="a" style="left:846.60px;top:180.00px;width:45.60px;height:14.40px;background:#fff;border:1px solid #7a7a7a;border-right-color:#d0d0d0;border-bottom-color:#d0d0d0;box-shadow:inset 0.7px 0.7px 0 #444;"></div>
<div class="t" style="left:848.80px;top:181.29px;font-size:9.4px;line-height:11.28px;color:#141414;font-weight:bold;transform-origin:0 50%;transform:scaleX(0.9151);-webkit-text-stroke:0.28px #141414;">HF_UV</div>
<div class="a" style="left:881.00px;top:181.60px;width:10.00px;height:11.50px;background:#f0f0f0;border:1px solid #fff;border-right-color:#6a6a6a;border-bottom-color:#6a6a6a;"></div>
<svg style="left:883.6px;top:186px" width="5" height="3" viewBox="0 0 5 3"><path d="M0 0h5L2.5 3z" fill="#111"/></svg>
<div class="a" style="left:906.50px;top:182.30px;width:8.30px;height:8.10px;background:#fff;border:1px solid #8a8a8a;border-right-color:#e2e2e2;border-bottom-color:#e2e2e2;box-shadow:inset 0.6px 0.6px 0 #5c5c5c;"></div>
<div class="a" style="left:734.60px;top:219.50px;width:20.40px;height:12.90px;background:#f0f0f0;border:1px solid #fff;border-right-color:#6a6a6a;border-bottom-color:#6a6a6a;box-shadow:inset -1px -1px 0 #a6a6a6;"></div><div class="t" style="left:738.75px;top:219.84px;font-size:9.4px;line-height:11.28px;color:#141414;font-weight:bold;transform-origin:0 50%;transform:scaleX(0.9415);-webkit-text-stroke:0.28px #141414;">tut</div>
<div class="a" style="left:758.40px;top:219.50px;width:26.10px;height:12.90px;background:#f0f0f0;border:1px solid #fff;border-right-color:#6a6a6a;border-bottom-color:#6a6a6a;box-shadow:inset -1px -1px 0 #a6a6a6;"></div><div class="t" style="left:759.49px;top:219.84px;font-size:9.4px;line-height:11.28px;color:#141414;font-weight:bold;transform-origin:0 50%;transform:scaleX(0.9415);-webkit-text-stroke:0.28px #141414;">mesh</div>
<div class="a" style="left:793.00px;top:219.50px;width:16.00px;height:12.90px;background:#f0f0f0;border:1px solid #fff;border-right-color:#6a6a6a;border-bottom-color:#6a6a6a;box-shadow:inset -1px -1px 0 #a6a6a6;"></div><div class="t" style="left:794.70px;top:219.84px;font-size:9.4px;line-height:11.28px;color:#a8a8a8;font-weight:bold;transform-origin:0 50%;transform:scaleX(0.9415);-webkit-text-stroke:0.28px #a8a8a8;">CF</div>
<div class="a" style="left:814.00px;top:219.50px;width:26.00px;height:12.90px;background:#f0f0f0;border:1px solid #fff;border-right-color:#6a6a6a;border-bottom-color:#6a6a6a;box-shadow:inset -1px -1px 0 #a6a6a6;"></div><div class="t" style="left:817.99px;top:219.84px;font-size:9.4px;line-height:11.28px;color:#141414;font-weight:bold;transform-origin:0 50%;transform:scaleX(0.9415);-webkit-text-stroke:0.28px #141414;">UVs</div>
<div class="a" style="left:851.50px;top:221.00px;width:23.50px;height:11.00px;background:#f3f3f3;"></div><div class="t" style="left:852.60px;top:221.19px;font-size:9.4px;line-height:11.28px;color:#2c2c2c;font-weight:bold;transform-origin:0 50%;transform:scaleX(1.0043);-webkit-text-stroke:0.28px #2c2c2c;">0x52</div>
<div class="a" style="left:729.80px;top:240.35px;width:0.90px;height:10.50px;background:#6e6e6e;"></div><div class="a" style="left:755.10px;top:240.35px;width:0.90px;height:10.50px;background:#bdbdbd;"></div><div class="t" style="left:731.40px;top:240.09px;font-size:9.4px;line-height:11.28px;color:#141414;font-weight:bold;transform-origin:0 50%;transform:scaleX(0.9415);-webkit-text-stroke:0.28px #141414;">100</div>
<div class="a" style="left:758.70px;top:240.00px;width:15.30px;height:12.00px;background:#f0f0f0;border:1px solid #fff;border-right-color:#6a6a6a;border-bottom-color:#6a6a6a;box-shadow:inset -1px -1px 0 #a6a6a6;"></div><div class="t" style="left:763.37px;top:239.89px;font-size:9.4px;line-height:11.28px;color:#141414;font-weight:bold;-webkit-text-stroke:0.28px #141414;transform-origin:0 50%;transform:scaleX(0.9415);">+</div>
<div class="a" style="left:778.40px;top:240.00px;width:10.40px;height:12.00px;background:#f0f0f0;border:1px solid #fff;border-right-color:#6a6a6a;border-bottom-color:#6a6a6a;box-shadow:inset -1px -1px 0 #a6a6a6;"></div><div class="t" style="left:781.73px;top:239.89px;font-size:9.4px;line-height:11.28px;color:#141414;font-weight:bold;-webkit-text-stroke:0.28px #141414;transform-origin:0 50%;transform:scaleX(0.9415);">-</div>
<div class="a" style="left:793.00px;top:240.00px;width:25.80px;height:12.00px;background:#f0f0f0;border:1px solid #fff;border-right-color:#6a6a6a;border-bottom-color:#6a6a6a;box-shadow:inset -1px -1px 0 #a6a6a6;"></div><div class="t" style="left:796.40px;top:239.89px;font-size:9.4px;line-height:11.28px;color:#141414;font-weight:bold;transform-origin:0 50%;transform:scaleX(0.9415);-webkit-text-stroke:0.28px #141414;">next</div>
<div class="a" style="left:821.50px;top:240.50px;width:10.00px;height:11.00px;background:#f0f0f0;"></div><div class="t" style="left:823.20px;top:240.09px;font-size:9.4px;line-height:11.28px;color:#141414;font-weight:bold;-webkit-text-stroke:0.28px #141414;transform-origin:0 50%;transform:scaleX(0.9415);">v</div>
<div class="a" style="left:835.90px;top:242.00px;width:7.70px;height:8.20px;background:#fff;border:1px solid #8a8a8a;border-right-color:#e2e2e2;border-bottom-color:#e2e2e2;box-shadow:inset 0.6px 0.6px 0 #5c5c5c;"></div>
<div class="a" style="left:728.80px;top:256.50px;width:156.00px;height:10.80px;background:#f0f0f0;"></div><div class="t" style="left:729.60px;top:256.39px;font-size:9.4px;line-height:11.28px;color:#141414;font-weight:bold;transform-origin:0 50%;transform:scaleX(0.9326);-webkit-text-stroke:0.28px #141414;">(existing test.obj will be overwritten!)</div>
<!-- sec_tobj -->
<div class="a" style="left:26.80px;top:95.80px;width:333.20px;height:353.00px;background:#141414;border-radius:4px;box-shadow:0 0 0 0.6px #8c8c8c,0 2px 10px rgba(0,0,0,.45);"></div>
<div class="a" style="left:26.80px;top:95.80px;width:333.20px;height:19.60px;background:#f1f3f9;border-radius:4px 4px 0 0;"></div>
<svg style="left:31.4px;top:102px" width="10" height="6" viewBox="0 0 10 6"><ellipse cx="5.4" cy="3" rx="4.4" ry="2.4" fill="#8fd0cf"/><ellipse cx="5.8" cy="2.6" rx="2.6" ry="1.1" fill="#e8f6f6"/><path d="M0 3.4l3-1.6v3z" fill="#4a9fa0"/></svg>
<div class="t" style="left:44.00px;top:99.94px;font-size:8.4px;line-height:10.08px;color:#1c1c1c;transform-origin:0 50%;transform:scaleX(0.9379);">test.obj</div>
<svg style="left:278px;top:99.3px" width="74" height="12" viewBox="0 0 74 12"><g stroke="#333" stroke-width="0.7" fill="none"><path d="M3.6 5.6h5"/><rect x="33.6" y="3" width="4.8" height="4.8" rx="0.8"/><path d="M64 3l5 5M69 3l-5 5"/></g></svg>
<svg style="left:0;top:0" width="400" height="460" viewBox="0 0 400 460">
<defs>
<linearGradient id="gA" gradientUnits="userSpaceOnUse" x1="190" y1="195" x2="130" y2="350"><stop offset="0" stop-color="#dadad2"/><stop offset=".45" stop-color="#9e9e9a"/><stop offset=".85" stop-color="#606060"/><stop offset="1" stop-color="#8a8a8a"/></linearGradient>
<linearGradient id="gB" gradientUnits="userSpaceOnUse" x1="168" y1="250" x2="196" y2="262"><stop offset="0" stop-color="#b4b4b4"/><stop offset=".5" stop-color="#5c5c60"/><stop offset="1" stop-color="#101014"/></linearGradient>
<linearGradient id="gB2" gradientUnits="userSpaceOnUse" x1="190" y1="190" x2="180" y2="335"><stop offset="0" stop-color="#fff" stop-opacity=".5"/><stop offset=".4" stop-color="#888" stop-opacity=".08"/><stop offset="1" stop-color="#000" stop-opacity=".45"/></linearGradient>
<linearGradient id="gC" gradientUnits="userSpaceOnUse" x1="194" y1="290" x2="289" y2="245"><stop offset="0" stop-color="#6e6e6c"/><stop offset=".5" stop-color="#949490"/><stop offset="1" stop-color="#c2c2ba"/></linearGradient>
<linearGradient id="gL" gradientUnits="userSpaceOnUse" x1="145" y1="195" x2="114" y2="359"><stop offset="0" stop-color="#151515"/><stop offset=".7" stop-color="#242424"/><stop offset=".92" stop-color="#484848"/><stop offset="1" stop-color="#a0a0a0"/></linearGradient>
</defs>
<path d="M97.5 376.6L193.7 326L193.7 322L115 357z" fill="#26262c"/>
<path d="M194.4 278.7L289.5 186.2L284 281.3L194.4 324.2z" fill="url(#gC)"/>
<path d="M194.4 323.4L284 280.6" stroke="#d0d0c8" stroke-width="0.8" opacity=".7"/>
<path d="M193.3 187.3L193.7 326L158.3 333.5z" fill="url(#gB)"/>
<path d="M193.3 187.3L193.7 326L158.3 333.5z" fill="url(#gB2)"/>
<path d="M193.3 187.3L158.3 333.5L115.4 358.9z" fill="url(#gA)"/>
<path d="M193.3 187.3L158.3 333.5" stroke="#e8e8e0" stroke-width="0.6" opacity=".6"/>
<path d="M115.4 358.9L158.3 333.5" stroke="#f0f0f0" stroke-width="0.9"/>
<path d="M145.2 195.5L114.2 358.9" stroke="url(#gL)" stroke-width="0.8"/>
<path d="M141 352.4l6.6-3v1.6l-6 2.6z" fill="#e4e4e4"/>
</svg>
<!-- sec_task -->
<div class="a" style="left:0.00px;top:531.60px;width:1000.00px;height:32.00px;background:#e1e1e1;border-top:0.6px solid #d0d0d0;"></div>
<svg style="left:12px;top:535.600px" width="20" height="20" viewBox="0 0 20 20"><defs><mask id="mm"><rect width="20" height="20" fill="#fff"/><circle cx="7.200" cy="8.200" r="5.400" fill="#000"/></mask><linearGradient id="gmo" x1="0" y1="0" x2="1" y2="1"><stop offset="0" stop-color="#f8b13a"/><stop offset="1" stop-color="#f28a1c"/></linearGradient></defs><circle cx="9.200" cy="11.200" r="6.600" fill="url(#gmo)" mask="url(#mm)"/><path d="M2.400 10a2.200 2.200 0 0 1 0.400-4.300a3 3 0 0 1 5.700 0.300a1.900 1.900 0 0 1-0.100 4z" fill="#9cc4f0"/><circle cx="12.900" cy="4.900" r="4.900" fill="#d62a22"/><text x="12.900" y="7.400" font-size="7" font-weight="bold" fill="#fff" text-anchor="middle" font-family="Liberation Sans">6</text></svg>
<div class="t" style="left:33.00px;top:537.73px;font-size:7.8px;line-height:9.36px;color:#1f1f1f;transform-origin:0 50%;transform:scaleX(0.8952);">14°C</div>
<div class="t" style="left:33.00px;top:548.00px;font-size:8.3px;line-height:9.96px;color:#555;transform-origin:0 50%;transform:scaleX(0.9486);">Mostly clear</div>
<svg style="left:261.4px;top:540px" width="15.6" height="15.6" viewBox="0 0 15.6 15.6"><defs><linearGradient id="gw" x1="0" y1="0" x2="1" y2="1"><stop offset="0" stop-color="#35b4f2"/><stop offset="1" stop-color="#0a66c8"/></linearGradient></defs><rect x="0" y="0" width="7.4" height="7.4" rx="0.6" fill="url(#gw)"/><rect x="8.2" y="0" width="7.4" height="7.4" rx="0.6" fill="url(#gw)"/><rect x="0" y="8.2" width="7.4" height="7.4" rx="0.6" fill="url(#gw)"/><rect x="8.2" y="8.2" width="7.4" height="7.4" rx="0.6" fill="url(#gw)"/></svg>
<div class="a" style="left:286.30px;top:537.60px;width:141.80px;height:19.60px;background:#f4f4f4;border-radius:9.8px;border:0.7px solid #d6d6d6;"></div>
<svg style="left:293.6px;top:542.4px" width="10" height="10" viewBox="0 0 10 10"><circle cx="4.2" cy="4.2" r="3.3" fill="none" stroke="#1c1c1c" stroke-width="1.25"/><path d="M6.6 6.6l2.8 2.8" stroke="#1c1c1c" stroke-width="1.35" stroke-linecap="round"/></svg>
<div class="t" style="left:310.00px;top:542.61px;font-size:8.6px;line-height:10.32px;color:#5a5a5a;transform-origin:0 50%;transform:scaleX(0.9689);">Search</div>
<svg style="left:398px;top:539px" width="27" height="17" viewBox="0 0 27 17"><path d="M1.4 5.4l2.4-1.2M3 7.6l2.6-1.4M6 3.6l2.4-1.4M7.2 6l2-1.2" stroke="#6a4fe0" stroke-width="1.3"/><path d="M20.6 1.4c1.6-0.6 3 0 3.4 1.2l-1.6 0.6c-0.4-0.4-0.8-0.4-1.2-0.2l0.8 8.4c0.4 3-1.2 5-3.6 5c-2.4 0-4-1.6-4-3.8c0-1 0.4-2 1-2.6l1.4 1.2c-0.8 1.6 0 3 1.6 3c1.2 0 1.8-1 1.6-2.6z" fill="#c9932c"/><path d="M13.8 8.6l3 2.6" stroke="#8a6418" stroke-width="1"/></svg>
<svg style="left:436.600px;top:539.600px" width="15.600" height="15" viewBox="0 0 15.600 15"><defs><linearGradient id="gtv" x1="0" y1="1" x2="1" y2="0"><stop offset="0" stop-color="#c9c9c9"/><stop offset="1" stop-color="#ffffff"/></linearGradient></defs><rect x="0" y="4.800" width="11.400" height="10.200" rx="1" fill="#1f1f1f"/><rect x="3.600" y="0" width="12" height="10.200" rx="1" fill="url(#gtv)" opacity=".93"/><rect x="3.600" y="4.800" width="7.800" height="5.400" fill="#8f8f8f" opacity=".55"/></svg>
<svg style="left:465px;top:539.600px" width="16" height="15" viewBox="0 0 16 15"><defs><radialGradient id="c1" cx="4" cy="2" r="10.500" gradientUnits="userSpaceOnUse"><stop offset="0" stop-color="#1f8df2"/><stop offset="1" stop-color="#1f8df2" stop-opacity="0"/></radialGradient><radialGradient id="c2" cx="14" cy="5" r="8" gradientUnits="userSpaceOnUse"><stop offset="0" stop-color="#a855f0"/><stop offset="1" stop-color="#d858b0" stop-opacity="0"/></radialGradient><radialGradient id="c3" cx="2.500" cy="10" r="7.500" gradientUnits="userSpaceOnUse"><stop offset="0" stop-color="#ffd23a"/><stop offset="1" stop-color="#8ed04a" stop-opacity="0"/></radialGradient><radialGradient id="c4" cx="9" cy="14.500" r="6" gradientUnits="userSpaceOnUse"><stop offset="0" stop-color="#ff5a3a"/><stop offset="1" stop-color="#f06a8a" stop-opacity="0"/></radialGradient><clipPath id="ccp"><path d="M4.600 0.600h5.200c1.600 0 2.600 0.800 3 2.200l0.400 1.200h1c1.400 0 2.200 1.200 1.800 2.600l-1.400 5.200c-0.400 1.600-1.400 2.600-3.200 2.600H6.200c-1.600 0-2.600-0.800-3-2.200l-0.400-1.200h-1c-1.400 0-2.200-1.200-1.800-2.600l1.400-5.200C1.800 1.600 2.800 0.600 4.600 0.600z"/></clipPath></defs><g clip-path="url(#ccp)"><rect width="16" height="15" fill="#e868a8"/><rect width="16" height="15" fill="url(#c3)"/><rect width="16" height="15" fill="url(#c4)"/><rect width="16" height="15" fill="url(#c2)"/><rect width="16" height="15" fill="url(#c1)"/><path d="M9.400 4L7 11" stroke="#f4f4f8" stroke-width="1" stroke-linecap="round" opacity=".9"/></g></svg>
<svg style="left:493.600px;top:540.400px" width="15.600" height="14.200" viewBox="0 0 15.600 14.200"><defs><linearGradient id="gfo" x1="0" y1="0" x2="0" y2="1"><stop offset="0" stop-color="#fdd95e"/><stop offset="1" stop-color="#f3bd2c"/></linearGradient></defs><path d="M0 1.200a1.200 1.200 0 0 1 1.200-1.200h4.400l1.600 1.800H0z" fill="#dd9c1a"/><path d="M0 1.600h14.600a1 1 0 0 1 1 1v10.600a1 1 0 0 1-1 1H1a1 1 0 0 1-1-1z" fill="url(#gfo)"/><path d="M3 14.200v-3.400a1.400 1.400 0 0 1 1.400-1.400h6.800a1.400 1.400 0 0 1 1.400 1.400v3.400z" fill="#1f7fd8"/></svg>
<div class="a" style="left:500.10px;top:558.20px;width:3.00px;height:1.60px;background:#8a8a8a;border-radius:1px;"></div>
<svg style="left:522.400px;top:539.600px" width="16.200" height="15.800" viewBox="0 0 16.200 15.800"><defs><linearGradient id="ged" x1="0.200" y1="0.100" x2="0.700" y2="1"><stop offset="0" stop-color="#2b9fe6"/><stop offset=".55" stop-color="#1670cf"/><stop offset="1" stop-color="#0f55b0"/></linearGradient><linearGradient id="ged2" x1="0" y1="0.500" x2="1" y2="0.300"><stop offset="0" stop-color="#2fb6dc"/><stop offset=".6" stop-color="#4fd08e"/><stop offset="1" stop-color="#6fdc7a"/></linearGradient></defs><circle cx="8" cy="7.900" r="7.800" fill="url(#ged)"/><path d="M0.600 5.600A7.800 7.800 0 0 1 15.800 7c0.200 2.400-1.400 3.400-3.200 3.400c-1.600 0-2.600-0.600-2.400-1.400c0.400-0.600 0.800-1.200 0.600-2.200c-0.400-1.800-2.400-2.800-4.600-2.600C3.600 4.400 1.600 5.600 0.600 5.600z" fill="url(#ged2)"/><path d="M16 8.400c-0.600 1.600-2 2.200-3.600 2.200c-1.800 0-3-0.800-2.600-1.800c0.600-0.800 0.800-1.600 0.400-2.600c-1.800 0.200-3.400 1.800-3.200 3.800c0.200 2.400 2.400 4 5.400 3.400c1.400-0.400 2.400-1 3-1.800c0.600-1 0.800-2 0.600-3.200z" fill="#e3e3e3"/><path d="M6.400 8.600c0.200-1.400 1.600-2.600 3.400-2.600c0.400 1 0.400 1.800-0.200 2.800c-0.200 0.600 0.200 1.200 1 1.600c-1 1.600-4.400 0.600-4.200-1.800z" fill="#0f58b2"/></svg>
<svg style="left:551.400px;top:539px" width="16" height="16.400" viewBox="0 0 16 16.400"><defs><linearGradient id="gst" x1="0" y1="0" x2="0" y2="1"><stop offset="0" stop-color="#1b5cb4"/><stop offset="1" stop-color="#143f86"/></linearGradient></defs><path d="M4.600 4V2.400a1.400 1.400 0 0 1 1.400-1.400h4a1.400 1.400 0 0 1 1.400 1.400V4" fill="none" stroke="#4aa6ea" stroke-width="1.300"/><rect x="0" y="3.400" width="16" height="12.400" rx="2.200" fill="url(#gst)"/><rect x="5" y="6.800" width="2.600" height="2.600" fill="#f25022"/><rect x="8.200" y="6.800" width="2.600" height="2.600" fill="#7fba00"/><rect x="5" y="10" width="2.600" height="2.600" fill="#00a4ef"/><rect x="8.200" y="10" width="2.600" height="2.600" fill="#ffb900"/></svg>
<svg style="left:579.4px;top:539.1px" width="16.400" height="16.400" viewBox="-8.200 -8.200 16.400 16.400"><circle r="8" fill="#fbc116"/><path d="M0 0L-6.930 -4A8 8 0 0 1 6.930 -4z" fill="#e33b2e"/><path d="M0 0L-6.930 -4A8 8 0 0 0 0 8z" fill="#2da94f"/><path d="M0 -3.800H7.100A8 8 0 0 0 -6.930 -4z" fill="#e33b2e"/><circle r="3.700" fill="#fff"/><circle r="2.900" fill="#3f86f4"/></svg>
<div class="a" style="left:586.10px;top:558.20px;width:3.00px;height:1.60px;background:#8a8a8a;border-radius:1px;"></div>
<svg style="left:607.6px;top:541px" width="17" height="12.400" viewBox="0 0 17 12.400"><rect x="0" y="0" width="17" height="12.400" fill="#f4f1ea"/><text x="0.400" y="9.600" font-size="9.600" font-weight="bold" fill="#3d9a3d" font-family="Liberation Sans">H</text><circle cx="12" cy="6.200" r="4.600" fill="#e8932e"/><circle cx="11" cy="5" r="1.800" fill="#f5c27c"/><text x="9.600" y="9.400" font-size="8" font-weight="bold" fill="#e9d6b0" font-family="Liberation Sans">D</text><path d="M5 3l4.400 6M9.400 3l-4.400 6" stroke="#2a2a2a" stroke-width="1.300"/></svg>
<div class="a" style="left:614.50px;top:558.20px;width:3.00px;height:1.60px;background:#8a8a8a;border-radius:1px;"></div>
<svg style="left:636px;top:540px" width="17.400" height="15" viewBox="0 0 17.400 15"><text x="2.600" y="6" font-size="7" font-weight="bold" fill="#3cc8dc" font-family="Liberation Mono">Hex</text><text x="0" y="13.600" font-size="7.600" font-weight="bold" fill="#111" font-family="Liberation Mono">2</text><text x="4.600" y="13.600" font-size="7.600" font-weight="bold" fill="#3cc8dc" font-family="Liberation Mono">obj</text></svg>
<div class="a" style="left:643.10px;top:558.20px;width:3.00px;height:1.60px;background:#8a8a8a;border-radius:1px;"></div>
<svg style="left:665.800px;top:536.600px" width="19" height="19" viewBox="0 0 19 19"><circle cx="7.700" cy="10.800" r="7.700" fill="#5865f2"/><path d="M4.100 8.400c2.200-1 5-1 7.200 0c1 1.600 1.400 3.400 1.400 5.200c-0.800 0.600-1.600 1-2.400 1.200l-0.600-1c-1.200 0.400-2.800 0.400-4 0l-0.600 1c-0.800-0.200-1.600-0.600-2.400-1.200c0-1.800 0.400-3.600 1.400-5.200z" fill="#fff"/><ellipse cx="5.900" cy="11.600" rx="1" ry="1.100" fill="#5865f2"/><ellipse cx="9.500" cy="11.600" rx="1" ry="1.100" fill="#5865f2"/><circle cx="13.600" cy="4.800" r="4.500" fill="#e8454c" stroke="#f3c9cb" stroke-width="0.500"/><circle cx="13.600" cy="4.800" r="1.500" fill="#fff"/></svg>
<div class="a" style="left:672.10px;top:558.20px;width:3.00px;height:1.60px;background:#8a8a8a;border-radius:1px;"></div>
<svg style="left:694px;top:541.200px" width="16.200" height="11.800" viewBox="0 0 16.200 11.800"><rect y="0.800" width="16.200" height="11" rx="0.800" fill="#242424"/><path d="M5 0h10.600a0.600 0.600 0 0 1 0.600 0.600v1.800H0v-0.800a0.600 0.600 0 0 1 0.600-0.600h3.600z" fill="#484848"/><path d="M2.400 4.200l3 2.400l-3 2.400" stroke="#fff" stroke-width="1.100" fill="none"/><path d="M7 9.600h4.400" stroke="#fff" stroke-width="1.100"/></svg>
<div class="a" style="left:700.50px;top:558.20px;width:3.00px;height:1.60px;background:#8a8a8a;border-radius:1px;"></div>
<div class="a" style="left:740.40px;top:536.60px;width:2.40px;height:23.00px;background:#eaeaea;border-radius:0 3px 3px 0;border:0.500px solid #dcdcdc;border-left:none;"></div>
<div class="a" style="left:718.40px;top:535.20px;width:22.20px;height:25.00px;background:#f1f1f1;border-radius:3px;border:0.600px solid #e9e9e9;"></div>
<svg style="left:722.800px;top:543.600px" width="15.600" height="7.800" viewBox="0 0 15.600 7.800"><rect width="15.600" height="7.800" fill="#fbfbfb"/><path d="M12.400 1.400C10.800 0.400 7.600 0 4.800 0.800C1.800 1.600 0.200 3.200 0.800 4.800c0.800 1.800 4.400 2.800 8 2.200c1.800-0.400 3.400-1 4.200-1.800c-1.400 0.600-3.400 1-5.200 1C4.600 6.200 2.400 5.400 2.200 4C2 2.600 4 1.400 6.800 1c2-0.200 4 0 5.600 0.400z" fill="#1f5f88"/><path d="M4 3.400c1.400-1 4.600-1.400 7.200-0.800c1.800 0.400 3 1 3.400 1.800H4.600c-0.600-0.200-0.800-0.600-0.600-1z" fill="#8fb4c6"/><path d="M4.800 4.800h9.800" stroke="#2a6a90" stroke-width="0.700"/></svg>
<div class="a" style="left:725.80px;top:557.60px;width:9.90px;height:1.90px;background:#1a73d9;border-radius:1px;"></div>
<svg style="left:869.600px;top:544.400px" width="8" height="5" viewBox="0 0 8 5"><path d="M0.600 4.400l3.400-3.400l3.400 3.400" stroke="#333" stroke-width="0.900" fill="none"/></svg>
<svg style="left:888.600px;top:543px" width="13" height="10" viewBox="0 0 13 10"><path d="M3 7.600a2.600 2.600 0 0 1 0.400-5.100a3.600 3.600 0 0 1 6.800 0.600a2.300 2.300 0 0 1-0.400 4.500z" fill="#7d7d7d"/><path d="M3.600 6a2 2 0 0 1 3.400-2" stroke="#555" stroke-width="0.600" fill="none"/><circle cx="8.600" cy="7.200" r="2.600" fill="#1a73d9"/><circle cx="8.600" cy="7.200" r="0.900" fill="#cfe4fb"/></svg>
<svg style="left:910px;top:542.400px" width="12" height="11" viewBox="0 0 12 11"><rect x="0.500" y="0.900" width="8.600" height="6.800" rx="0.600" fill="none" stroke="#333" stroke-width="0.900"/><path d="M4.800 7.800v2M2.400 10h5" stroke="#333" stroke-width="0.900"/><rect x="8.400" y="0.400" width="2.600" height="4.600" rx="0.500" fill="#e3e3e3" stroke="#333" stroke-width="0.800"/></svg>
<svg style="left:925.600px;top:543px" width="11" height="9.400" viewBox="0 0 11 9.400"><path d="M0.500 3.200h1.800l2.600-2.400v7.800l-2.600-2.400H0.500z" fill="none" stroke="#333" stroke-width="0.800" stroke-linejoin="round"/><path d="M6.400 2.800a2.600 2.600 0 0 1 0 3.800" stroke="#555" stroke-width="0.700" fill="none"/><path d="M7.800 1.400a4.600 4.600 0 0 1 0 6.600" stroke="#9a9a9a" stroke-width="0.700" fill="none"/></svg>
<div class="t" style="left:968.40px;top:537.31px;font-size:8.3px;line-height:9.96px;color:#222;transform-origin:0 50%;transform:scaleX(0.9052);">20:19</div>
<div class="t" style="left:947.00px;top:548.00px;font-size:8.3px;line-height:9.96px;color:#222;transform-origin:0 50%;transform:scaleX(0.9824);">06/11/2025</div>
</div>
</body>
</html>
